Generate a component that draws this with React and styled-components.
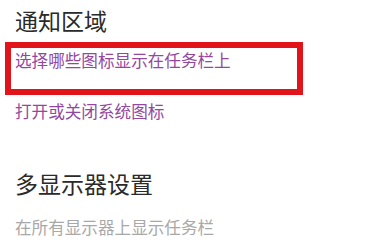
import React from 'react'
import styled, { createGlobalStyle } from 'styled-components'

const GlobalStyle = createGlobalStyle`
    body {
        margin: 0;
        background: #fff;
        font-family: "Noto Sans CJK SC", "Noto Sans", sans-serif;
    }
`

const Page = styled.div({
    width: "375px",
    height: "247px",
    padding: "5px 0 0 5px",
    boxSizing: "border-box",
    overflow: "hidden",
})

const Title = styled.h2(({ $gap }) => ({
    margin: `${$gap}px 0 0 10px`,
    fontSize: "23px",
    lineHeight: "30px",
    fontWeight: "400",
    color: "#2a2a2a",
}))

const Item = styled.div(({ $muted, $gap }) => ({
    margin: `${$gap}px 0 0 10px`,
    fontSize: "16.6px",
    lineHeight: "24px",
    color: $muted ? "#a8a8a8" : "#93479f",
}))

const Highlight = styled.div({
    marginTop: "7px",
    width: "298px",
    height: "53px",
    boxSizing: "border-box",
    border: "6px solid #e1141c",
    padding: "0 0 0 4px",
    fontSize: "16.6px",
    lineHeight: "24px",
    color: "#93479f",
})

const App = () => {
    return (
        <Page>
            <GlobalStyle />
            <Title $gap={0}>通知区域</Title>
            <Highlight>选择哪些图标显示在任务栏上</Highlight>
            <Item $gap={4}>打开或关闭系统图标</Item>
            <Title $gap={45}>多显示器设置</Title>
            <Item $gap={17} $muted>在所有显示器上显示任务栏</Item>
        </Page>
    )
}

export default App
